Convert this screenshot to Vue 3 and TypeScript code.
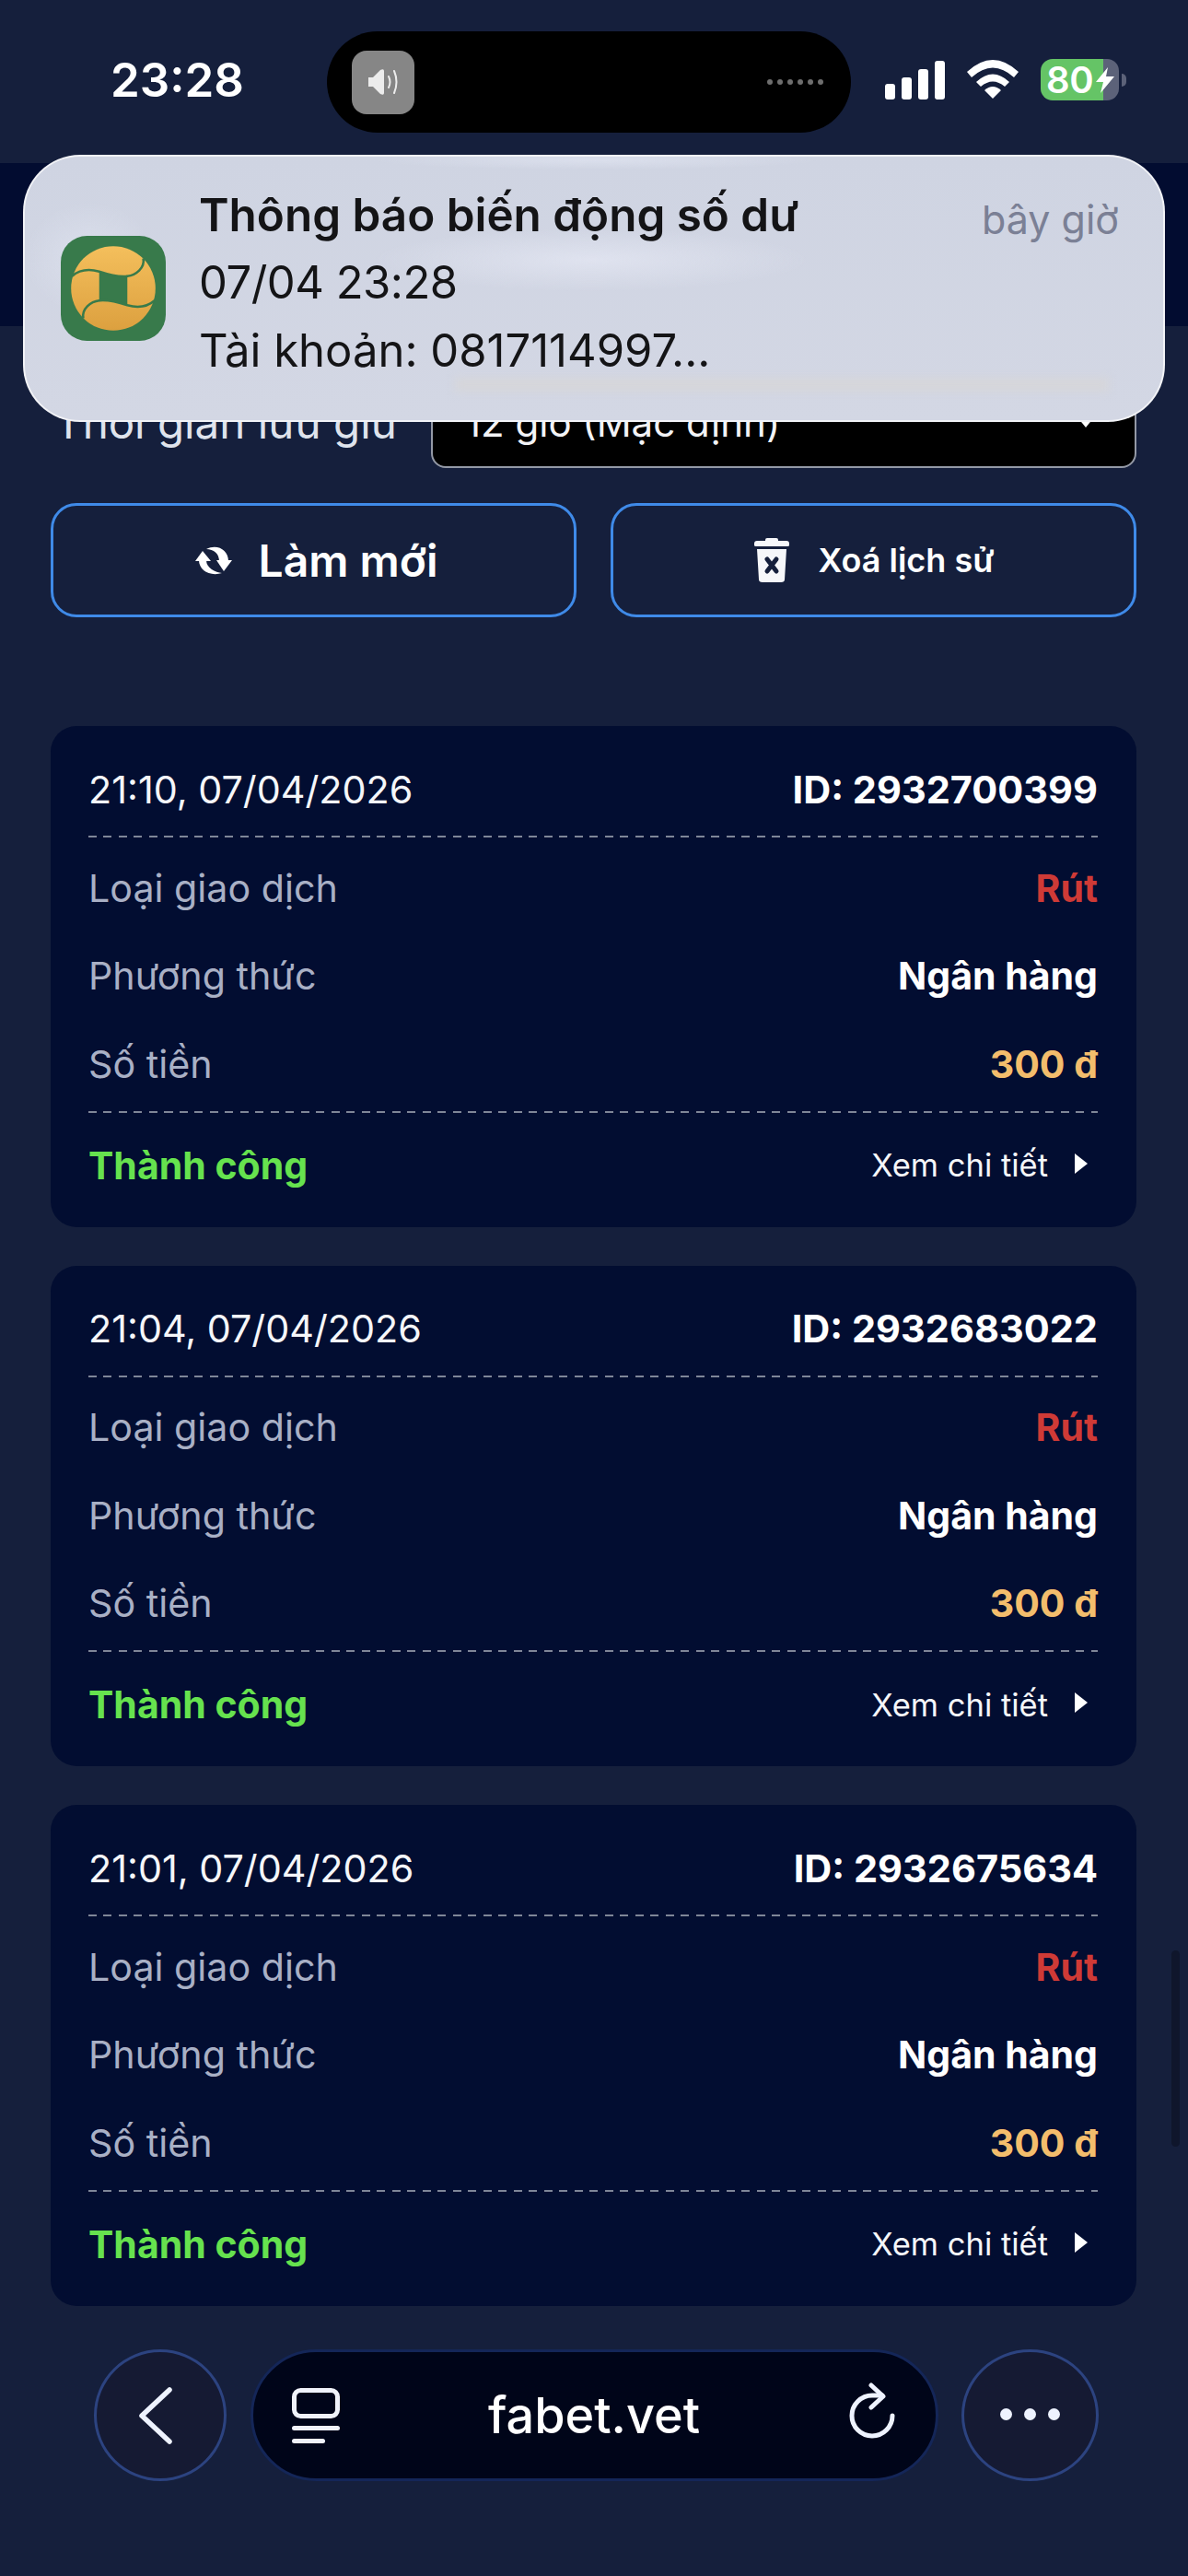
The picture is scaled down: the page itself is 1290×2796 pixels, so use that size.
<script setup lang="ts">
interface Tx { time: string; id: string }
const items: Tx[] = [
  { time: '21:10, 07/04/2026', id: '2932700399' },
  { time: '21:04, 07/04/2026', id: '2932683022' },
  { time: '21:01, 07/04/2026', id: '2932675634' },
]
</script>

<template>
  <div class="page">
    <header class="status">
      <span class="clock">23:28</span>
      <div class="island">
        <div class="sound">
          <svg width="34" height="30" viewBox="0 0 34 30">
            <path d="M1 10 h5 L14 2 Q18 0 18 3 V27 Q18 30 14 28 L6 20 H1 Z" fill="#ececec" />
            <path d="M23 9 Q26 15 23 21" fill="none" stroke="#ececec" stroke-width="2" stroke-linecap="round" />
            <path d="M29 3 Q34 15 29 27" fill="none" stroke="#ececec" stroke-width="2" stroke-linecap="round" />
          </svg>
        </div>
        <div class="dots"><i v-for="n in 6" :key="n"></i></div>
      </div>
      <div class="indicators">
        <svg class="signal" width="66" height="42" viewBox="0 0 66 42">
          <rect x="0" y="25" width="11" height="17" rx="3" fill="#fff" />
          <rect x="18" y="18" width="11" height="24" rx="3" fill="#fff" />
          <rect x="36" y="9" width="11" height="33" rx="3" fill="#fff" />
          <rect x="54" y="0" width="11" height="42" rx="3" fill="#fff" />
        </svg>
        <svg class="wifi" width="58" height="42" viewBox="0 0 58 42">
          <path d="M1 13 Q29 -13 57 13 L52 19 Q29 -2 6 19 Z" fill="#fff" />
          <path d="M11 24 Q29 7 47 24 L42 29 Q29 18 16 29 Z" fill="#fff" />
          <path d="M20 33 Q29 25 38 33 L29 42 Z" fill="#fff" />
        </svg>
        <div class="battery">
          <div class="battery-body">
            <span class="battery-text">80</span>
            <svg class="bolt" width="20" height="28" viewBox="0 0 20 28">
              <path d="M13 0 L0 16 H8 L5 28 L20 10 H11 Z" fill="#fff" />
            </svg>
          </div>
          <i class="nub"></i>
        </div>
      </div>
    </header>

    <div class="topbar"></div>

    <main class="content">
      <div class="retain">
        <span class="retain-label">Thời gian lưu giữ</span>
        <div class="select">
          <span>12 giờ (Mặc định)</span>
          <i class="caret"></i>
        </div>
      </div>

      <div class="actions">
        <button class="btn btn-big">
          <svg width="40" height="31" viewBox="0 0 40 31">
            <path d="M4 15 C4 26 16 33 29 29 C22 28 12 24 12 15 Z" fill="#fff" />
            <path d="M12 3 C24 -3 36 4 36 16 L26 16 C26 8 20 3 12 3 Z" fill="#fff" />
            <path d="M0 16 H17 L8 5 Z" fill="#fff" />
            <path d="M23 15 H40 L31 27 Z" fill="#fff" />
          </svg>
          <span>Làm mới</span>
        </button>
        <button class="btn btn-small">
          <svg width="40" height="50" viewBox="0 0 40 50">
            <path d="M13 3 Q13 1 15 1 H25 Q27 1 27 3 V4 H36 Q39 4 39 7 V9 Q39 10 37 10 H3 Q1 10 1 9 V7 Q1 4 4 4 H13 Z" fill="#f6f7fa" />
            <path d="M4 13 H36 L34 46 Q34 49 30 49 H10 Q6 49 6 46 Z" fill="#f6f7fa" />
            <path d="M15 24 L25 37 M25 24 L15 37" stroke="#151f3c" stroke-width="5" stroke-linecap="round" />
          </svg>
          <span>Xoá lịch sử</span>
        </button>
      </div>

      <section class="list">
        <article v-for="tx in items" :key="tx.id" class="card">
          <div class="card-head">
            <span class="time">{{ tx.time }}</span>
            <span class="strong tx-id">ID: {{ tx.id }}</span>
          </div>
          <div class="card-body">
            <div class="row"><span class="muted">Loại giao dịch</span><span class="strong red">Rút</span></div>
            <div class="row"><span class="muted">Phương thức</span><span class="strong">Ngân hàng</span></div>
            <div class="row"><span class="muted">Số tiền</span><span class="strong gold">300 đ</span></div>
          </div>
          <div class="card-foot">
            <span class="strong green">Thành công</span>
            <span class="detail">Xem chi tiết<i class="arrow"></i></span>
          </div>
        </article>
      </section>
    </main>

    <nav class="browser">
      <div class="round round-back">
        <svg width="40" height="66" viewBox="0 0 40 66">
          <path d="M36 5 L6 33 L36 61" fill="none" stroke="#eef3ff" stroke-width="5.5" stroke-linecap="round" stroke-linejoin="round" />
        </svg>
      </div>
      <div class="pill">
        <svg class="pill-left" width="52" height="60" viewBox="0 0 52 60">
          <rect x="2.5" y="2.5" width="47" height="28" rx="7" fill="none" stroke="#f0f3fa" stroke-width="5" />
          <rect x="0" y="41" width="52" height="5" rx="2.5" fill="#f0f3fa" />
          <rect x="0" y="55" width="36" height="5" rx="2.5" fill="#f0f3fa" />
        </svg>
        <span class="domain">fabet.vet</span>
        <svg class="pill-right" width="52" height="62" viewBox="0 0 52 62">
          <path d="M47 36 A22 22 0 1 1 25 14 H36" fill="none" stroke="#eef3ff" stroke-width="5" stroke-linecap="round" />
          <path d="M24 3 L37 15 L24 27" fill="none" stroke="#eef3ff" stroke-width="5" stroke-linecap="round" stroke-linejoin="round" />
        </svg>
      </div>
      <div class="round round-more">
        <div class="more"><i></i><i></i><i></i></div>
      </div>
    </nav>

    <div class="scroll-thumb"></div>

    <aside class="toast">
      <svg class="logo" width="114" height="114" viewBox="0 0 112 112">
        <defs>
          <linearGradient id="coin" x1="0" y1="0" x2="0" y2="1">
            <stop offset="0" stop-color="#f4bf5c" />
            <stop offset="1" stop-color="#dca03f" />
          </linearGradient>
        </defs>
        <rect width="112" height="112" rx="28" fill="#387a4b" />
        <circle cx="56" cy="56" r="45" fill="url(#coin)" />
        <path d="M41 38 C50 41 62 44 71 42 L71 74 C62 71 50 68 41 70 Z" fill="#387a4b" />
        <path d="M12 43 C20 36 30 35 41 38 C50 41 62 44 71 43 C80 42 90 34 88 24" fill="none" stroke="#387a4b" stroke-width="2.5" />
        <path d="M100 69 C92 76 82 77 71 74 C62 71 50 68 41 69 C32 70 22 78 24 88" fill="none" stroke="#387a4b" stroke-width="2.5" />
      </svg>
      <div class="toast-text">
        <div class="toast-title">Thông báo biến động số dư</div>
        <div class="toast-date">07/04 23:28</div>
        <div>Tài khoản: 0817114997...</div>
      </div>
      <span class="toast-when">bây giờ</span>
    </aside>
  </div>
</template>

<style>
html, body { margin: 0; background: #151f3c; }
</style>

<style scoped>
.page {
  position: relative;
  width: 1290px;
  height: 2796px;
  overflow: hidden;
  background: #151f3c;
  color: #fff;
  font-family: Inter, "Noto Sans", sans-serif;
  display: flex;
  flex-direction: column;
}
i { display: block; }

.status {
  height: 177px;
  flex: none;
  box-sizing: border-box;
  padding: 34px 0 33px 120px;
  display: flex;
  align-items: flex-start;
}
.clock {
  flex: none;
  width: 235px;
  font-size: 51px;
  line-height: 106px;
  font-weight: 600;
}
.island {
  flex: none;
  width: 569px;
  height: 110px;
  border-radius: 55px;
  background: #000;
  box-sizing: border-box;
  padding: 0 30px 0 27px;
  display: flex;
  align-items: center;
  justify-content: space-between;
}
.sound {
  width: 68px;
  height: 69px;
  border-radius: 16px;
  background: #868686;
  display: flex;
  align-items: center;
  justify-content: center;
}
.dots { display: flex; gap: 5px; }
.dots i { width: 6px; height: 6px; border-radius: 50%; background: #6e6e6e; }
.indicators {
  flex: none;
  display: flex;
  align-items: flex-start;
  margin-left: 37px;
  padding-top: 30px;
}
.signal { margin-top: 2px; }
.wifi { margin-left: 22px; margin-top: 1px; }
.battery { margin-left: 23px; display: flex; align-items: center; gap: 3px; }
.battery-body {
  position: relative;
  width: 85px;
  height: 45px;
  border-radius: 13px;
  background: linear-gradient(90deg, #65c466 0 68px, #5c6279 68px);
  display: flex;
  align-items: center;
}
.battery-text {
  font-size: 40px;
  font-weight: 600;
  line-height: 44px;
  margin-left: 6px;
  letter-spacing: -0.3px;
}
.bolt { position: absolute; left: 60px; top: 9px; }
.nub { width: 5px; height: 14px; background: #5c6279; border-radius: 0 7px 7px 0; }

.topbar { height: 177px; flex: none; background: #020c30; }

.content { padding: 0 56px 0 55px; flex: none; }
.retain {
  display: flex;
  align-items: center;
  padding-top: 54px;
}
.retain-label {
  flex: none;
  width: 413px;
  box-sizing: border-box;
  padding-left: 4px;
  font-size: 47.5px;
  color: #dfe3ec;
  white-space: nowrap;
}
.select {
  flex: 1;
  height: 100px;
  box-sizing: border-box;
  background: #000;
  border: 2.5px solid #9499a6;
  border-radius: 16px;
  padding: 0 44px 0 35px;
  font-size: 42px;
  display: flex;
  align-items: center;
  justify-content: space-between;
  color: #f2f3f6;
}
.caret {
  width: 0;
  height: 0;
  border-left: 9px solid transparent;
  border-right: 9px solid transparent;
  border-top: 11px solid #fff;
}

.actions {
  margin-top: 38px;
  display: grid;
  grid-template-columns: 1fr 1fr;
  gap: 37px;
}
.btn {
  height: 124px;
  box-sizing: border-box;
  border: 3px solid #3f8ae8;
  border-radius: 28px;
  background: transparent;
  color: #fff;
  font-family: inherit;
  display: flex;
  align-items: center;
  justify-content: center;
  padding: 0;
}
.btn-big { gap: 29px; padding-left: 6px; font-size: 48px; font-weight: 600; }
.btn-small { gap: 31px; font-size: 36px; font-weight: 600; }

.list { margin-top: 118px; display: flex; flex-direction: column; gap: 42px; }
.card {
  height: 543.5px;
  box-sizing: border-box;
  background: #020d31;
  border-radius: 28px;
  padding: 0 42px 0 41px;
  font-size: 41.2px;
}
.card-head, .row, .card-foot {
  display: flex;
  justify-content: space-between;
  align-items: center;
}
.card-head {
  height: 121px;
  padding-top: 16px;
  box-sizing: border-box;
  background: repeating-linear-gradient(90deg, #7f8698 0 9px, transparent 9px 16.5px) left bottom / 100% 2px no-repeat;
}
.card-body {
  padding: 7px 0 5px;
  background: repeating-linear-gradient(90deg, #7f8698 0 9px, transparent 9px 16.5px) left bottom / 100% 2px no-repeat;
}
.row { height: 95.5px; }
.card-foot { height: 112px; padding-top: 2px; box-sizing: border-box; }
.time { color: #f5f6f9; font-size: 41.3px; }
.strong { font-weight: 700; font-size: 41px; color: #fff; }
.tx-id { font-size: 41.5px; }
.muted { color: #a9b0c5; }
.red { color: #cf3a36; }
.gold { color: #f3bd6c; }
.green { color: #66e24e; }
.detail {
  display: flex;
  align-items: center;
  font-size: 34.5px;
  color: #f5f6f9;
}
.arrow {
  width: 0;
  height: 0;
  margin: -4px 11px 0 29px;
  border-top: 11px solid transparent;
  border-bottom: 11px solid transparent;
  border-left: 14px solid #fff;
}

.browser {
  margin-top: 47.5px;
  padding-left: 102px;
  display: flex;
  align-items: center;
  gap: 25.5px;
}
.round {
  flex: none;
  height: 143px;
  box-sizing: border-box;
  border-radius: 50%;
  background: #151a33;
  border: 3px solid #2c4380;
  display: flex;
  align-items: center;
  justify-content: center;
}
.round-back { width: 144px; padding-right: 13px; }
.round-more { width: 149px; }
.pill {
  flex: none;
  width: 747px;
  height: 143px;
  box-sizing: border-box;
  border-radius: 72px;
  background: #000519;
  border: 3px solid #142658;
  padding: 0 42px;
  display: grid;
  grid-template-columns: 1fr auto 1fr;
  align-items: center;
}
.pill-right { justify-self: end; margin-top: -9px; }
.domain { font-size: 54px; font-weight: 500; color: #fff; }
.more { display: flex; gap: 13px; margin-top: -3px; }
.more i { width: 13px; height: 13px; border-radius: 50%; background: #eef3ff; }

.scroll-thumb {
  position: absolute;
  left: 1272px;
  top: 2117px;
  width: 9px;
  height: 213px;
  border-radius: 5px;
  background: #0f162c;
}

.toast {
  position: absolute;
  left: 25px;
  top: 168px;
  width: 1240px;
  height: 290px;
  box-sizing: border-box;
  border-radius: 62px;
  border: 2px solid rgba(255, 255, 255, 0.7);
  background:
    radial-gradient(ellipse 240px 10px at 620px 4px, rgba(228, 232, 244, 0.55), transparent),
    radial-gradient(ellipse 235px 34px at 615px 112px, rgba(228, 231, 243, 0.75), transparent),
    radial-gradient(ellipse 70px 60px at 70px 110px, rgba(228, 232, 244, 0.55), transparent),
    linear-gradient(#cfd4e2, #d3d7e4);
  display: flex;
  align-items: center;
  color: #141416;
  padding-left: 39px;
}
.toast::after {
  content: "";
  position: absolute;
  left: 467px;
  top: 240px;
  width: 710px;
  height: 15px;
  background: #d6d6da;
  filter: blur(5px);
}
.logo { flex: none; }
.toast-text {
  margin-left: 36px;
  margin-top: -12px;
  font-size: 49px;
  line-height: 74px;
}
.toast-title { font-weight: 600; font-size: 49.4px; }
.toast-date { letter-spacing: -0.5px; }
.toast-when {
  position: absolute;
  right: 48px;
  top: 38px;
  font-size: 43px;
  line-height: 60px;
  color: #7b8095;
}
</style>
